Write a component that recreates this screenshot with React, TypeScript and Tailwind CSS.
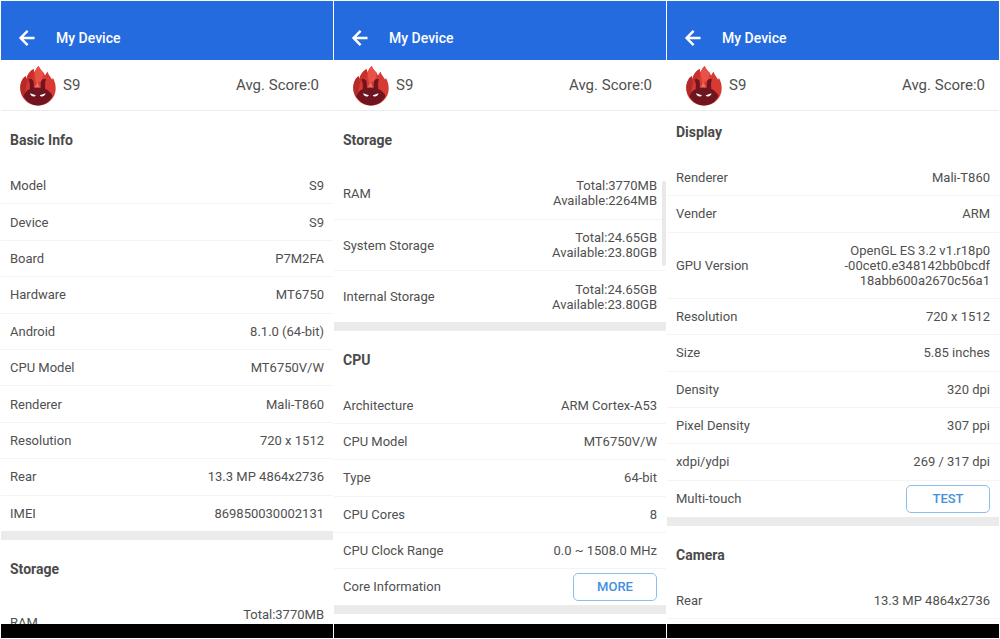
import type { ReactNode } from "react";

interface InfoRow {
  label: string;
  value?: string[];
  action?: string;
}

interface InfoSection {
  title: string;
  rows: InfoRow[];
  // extra classes of the row list, rows share the height that is left over
  listClass?: string;
}

const BASIC_INFO: InfoSection = {
  title: "Basic Info",
  listClass: "min-h-[363px]",
  rows: [
    { label: "Model", value: ["S9"] },
    { label: "Device", value: ["S9"] },
    { label: "Board", value: ["P7M2FA"] },
    { label: "Hardware", value: ["MT6750"] },
    { label: "Android", value: ["8.1.0 (64-bit)"] },
    { label: "CPU Model", value: ["MT6750V/W"] },
    { label: "Renderer", value: ["Mali-T860"] },
    { label: "Resolution", value: ["720 x 1512"] },
    { label: "Rear", value: ["13.3 MP 4864x2736"] },
    { label: "IMEI", value: ["869850030002131"] },
  ],
};

const STORAGE: InfoSection = {
  title: "Storage",
  listClass: "min-h-[154px]",
  rows: [
    { label: "RAM", value: ["Total:3770MB", "Available:2264MB"] },
    { label: "System Storage", value: ["Total:24.65GB", "Available:23.80GB"] },
    { label: "Internal Storage", value: ["Total:24.65GB", "Available:23.80GB"] },
  ],
};

const CPU: InfoSection = {
  title: "CPU",
  listClass: "min-h-[217px]",
  rows: [
    { label: "Architecture", value: ["ARM Cortex-A53"] },
    { label: "CPU Model", value: ["MT6750V/W"] },
    { label: "Type", value: ["64-bit"] },
    { label: "CPU Cores", value: ["8"] },
    { label: "CPU Clock Range", value: ["0.0 ~ 1508.0 MHz"] },
    { label: "Core Information", action: "MORE" },
  ],
};

const DISPLAY: InfoSection = {
  title: "Display",
  listClass: "min-h-[357px]",
  rows: [
    { label: "Renderer", value: ["Mali-T860"] },
    { label: "Vender", value: ["ARM"] },
    {
      label: "GPU Version",
      value: ["OpenGL ES 3.2 v1.r18p0", "-00cet0.e348142bb0bcdf", "18abb600a2670c56a1"],
    },
    { label: "Resolution", value: ["720 x 1512"] },
    { label: "Size", value: ["5.85 inches"] },
    { label: "Density", value: ["320 dpi"] },
    { label: "Pixel Density", value: ["307 ppi"] },
    { label: "xdpi/ydpi", value: ["269 / 317 dpi"] },
    { label: "Multi-touch", action: "TEST" },
  ],
};

const CAMERA: InfoSection = {
  title: "Camera",
  listClass: "border-b border-[#f4f4f4]",
  rows: [{ label: "Rear", value: ["13.3 MP 4864x2736"] }],
};

function BackArrow() {
  return (
    <svg viewBox="0 0 18 18" className="size-[18px]" fill="none" stroke="currentColor" aria-hidden="true">
      <path d="M16.500 9H3M9.600 1.800L2.600 9l7 7.200" strokeWidth="2.500" />
    </svg>
  );
}

// Flame with the ant face in front of it
function AntLogo() {
  return (
    <svg viewBox="0 0 36 40" className="h-10 w-9 shrink-0" aria-hidden="true">
      <path
        d="M18 39.500C8 39.500 .3 32 .3 22.500C.3 17.500 2 13 5.500 10L6.200 13C7.500 8.500 10 5 13.500 3L14.500 6.500C15.500 3.500 17 1.500 18.700 0C19.500 2.500 21.500 4.500 23.800 7L25 9.500L27.500 5.500C28 8.500 30.500 10.500 32 13.500L33 12C35 15.500 35.700 19 35.700 22.500C35.700 32 28 39.500 18 39.500Z"
        fill="#d63a33"
      />
      <path d="M5.500 10L6.200 13L7 17L4 32C-1.500 25 -1 15 5.500 10Z" fill="#b52a29" />
      <path d="M13.500 3L14.500 6.500L12 14L7 17L6.200 13C7.500 8.500 10 5 13.500 3Z" fill="#c9302c" />
      <path d="M18.700 0C19.500 2.500 21.500 4.500 23.800 7L22 15L16 17L14.500 6.500C15.500 3.500 17 1.500 18.700 0Z" fill="#e85048" />
      <path d="M17.500 16L20 22H14.500Z" fill="#ee7460" />
      <path
        d="M8.500 13.500C11.500 12.300 13.800 14 13.800 17V21.800Q17.500 21 20.800 21.800V17C20.800 14 23 12.300 26 13.500C24.800 15.500 25 19 25.300 23C28.500 24.500 31.500 27 32.500 30C29.500 36 24 39.500 18 39.500S6.500 36 3.500 30.500C4.500 27 6.500 24.500 9.800 23C10 19 9.700 15.500 8.500 13.500Z"
        fill="#701520"
      />
      <path d="M10 27.300L15.800 29.300C15 31.500 11 31 10 27.300ZM25.600 27.300L19.800 29.300C20.600 31.500 24.600 31 25.600 27.300Z" fill="#fff" />
    </svg>
  );
}

function Section({ section }: { section: InfoSection }) {
  return (
    <section className="shrink-0">
      <h2 className="flex h-[57px] items-center px-[9px] text-sm font-bold text-[#4a4a4a]">{section.title}</h2>
      <dl className={`flex flex-col divide-y divide-[#f4f4f4] ${section.listClass ?? ""}`}>
        {section.rows.map((row) => (
          <div key={row.label} className="flex grow items-center justify-between gap-4 px-[9px] py-[10px]">
            <dt>{row.label}</dt>
            <dd className="text-right">
              {row.value?.map((line) => (
                <span key={line} className="block">
                  {line}
                </span>
              ))}
              {row.action && (
                <button
                  type="button"
                  aria-label={`${row.action} ${row.label}`}
                  className="-my-1.5 block h-7 w-[84px] rounded-[5px] border border-[#8dbdec] font-medium text-[#4190e0]"
                >
                  {row.action}
                </button>
              )}
            </dd>
          </div>
        ))}
      </dl>
    </section>
  );
}

function DeviceScreen({ scrolled, children }: { scrolled?: boolean; children: ReactNode }) {
  return (
    <div className="flex min-w-0 flex-col overflow-hidden bg-white">
      <header className="flex h-[59px] shrink-0 items-center gap-5 bg-[#246bdf] pt-[14px] pl-[17px] text-white">
        <button type="button" aria-label="Back">
          <BackArrow />
        </button>
        <h1 className="text-sm font-medium">My Device</h1>
      </header>
      <div className="flex h-[51px] shrink-0 items-center gap-[7px] border-b border-[#ececec] pt-px pr-[14px] pl-[19px] text-[15px]">
        <AntLogo />
        <span>S9</span>
        <span className="ml-auto">Avg. Score:0</span>
      </div>
      <main className="min-h-0 flex-1 overflow-hidden">
        <div className={scrolled ? "-mt-2" : ""}>{children}</div>
      </main>
      <div className="h-[14px] shrink-0 bg-black" />
    </div>
  );
}

function Divider() {
  return <div className="h-[9px] bg-[#ebebeb]" />;
}

export default function App() {
  return (
    <div className="grid h-screen grid-cols-3 gap-px bg-white p-px font-['Roboto',sans-serif] text-[13px] leading-[15px] text-[#505050]">
      <DeviceScreen>
        <Section section={BASIC_INFO} />
        <Divider />
        <Section section={STORAGE} />
      </DeviceScreen>

      <DeviceScreen>
        <div className="relative">
          <Section section={STORAGE} />
          <Divider />
          <Section section={CPU} />
          <Divider />
          {/* scroll indicator */}
          <div className="absolute top-[70px] right-0 h-[85px] w-1 rounded-full bg-[#e9e9e9]" />
        </div>
      </DeviceScreen>

      <DeviceScreen scrolled>
        <Section section={DISPLAY} />
        <Divider />
        <Section section={CAMERA} />
      </DeviceScreen>
    </div>
  );
}
